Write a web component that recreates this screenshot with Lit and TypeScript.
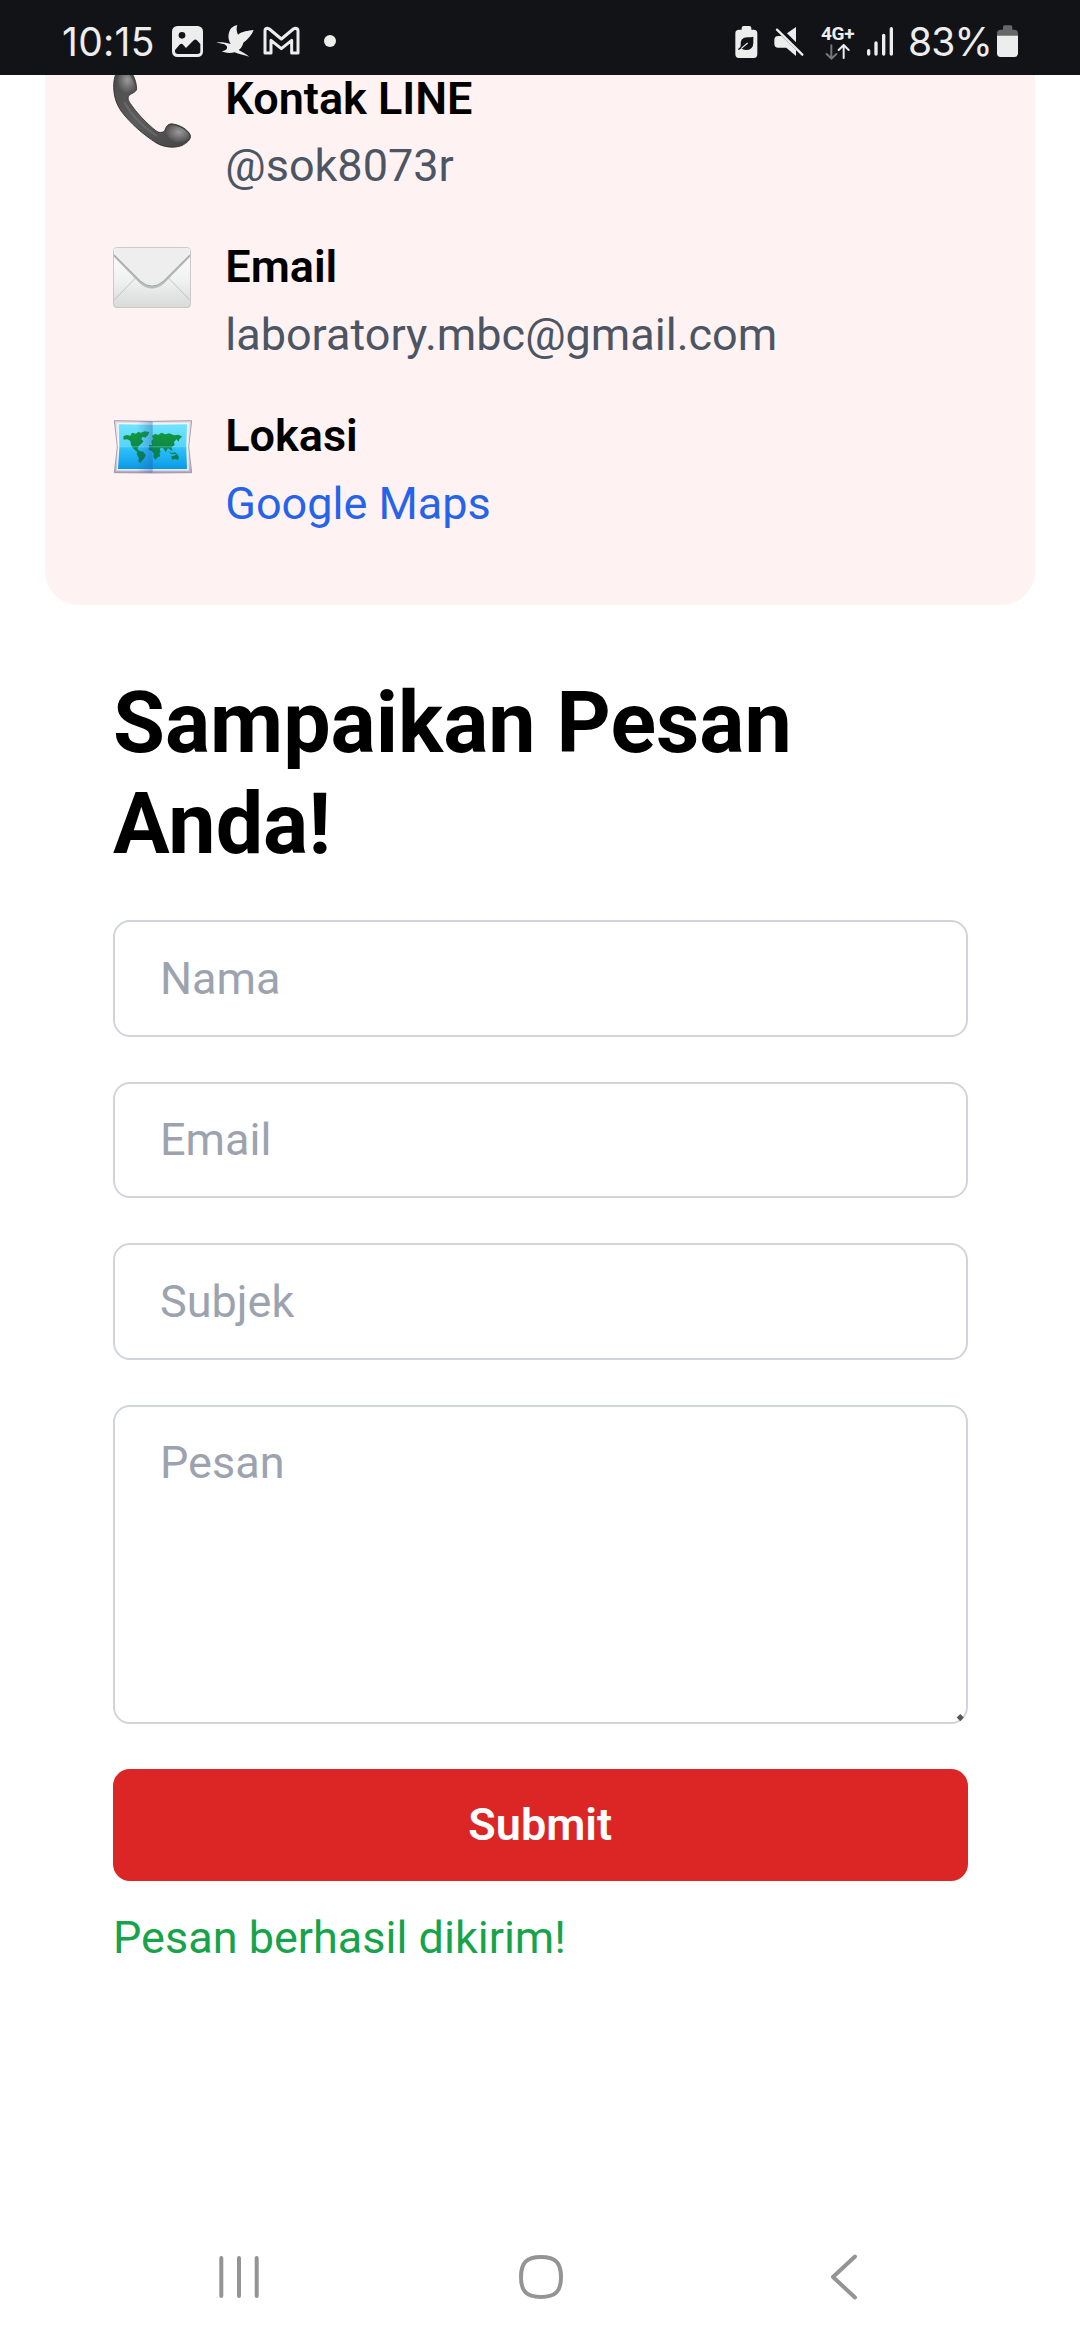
import { LitElement, html, css, svg } from "lit";
import { customElement } from "lit/decorators.js";

const phoneIcon = svg`
  <svg class="emoji" viewBox="249 16.5 237 270">
    <defs>
      <linearGradient id="pBody" x1="0" y1="0" x2="1" y2="1">
        <stop offset="0" stop-color="#4a4a4a" />
        <stop offset="0.5" stop-color="#5c5c5c" />
        <stop offset="1" stop-color="#444" />
      </linearGradient>
      <radialGradient id="pEar" cx="0.55" cy="0.4" r="0.6">
        <stop offset="0" stop-color="#9a9a9a" />
        <stop offset="1" stop-color="#505050" />
      </radialGradient>
    </defs>
    <path fill="url(#pBody)" stroke="#2b2b2b" stroke-width="2.5" stroke-linejoin="round"
      d="M251 84C250 50 262 25 280 24C304 26 319 60 320 88C319 99 302 102 297 108C292 115 295 124 301 132C318 158 350 192 378 214C387 221 400 220 404 213C408 204 412 193 425 193C448 195 474 210 481 227C484 240 470 251 456 258C430 268 400 262 380 251C340 226 300 190 275 157C258 133 252 110 251 84Z" />
    <path fill="url(#pEar)" d="M263 72C262 48 272 34 284 34C300 42 314 66 316 87C312 97 298 100 291 103C274 101 265 88 263 72Z" />
    <path fill="url(#pEar)" d="M409 214C410 203 418 196 428 197C450 200 472 212 478 229C476 242 460 250 440 249C422 244 408 232 409 214Z" />
    <path fill="none" stroke="#757575" stroke-width="6" stroke-linecap="round" opacity="0.6"
      d="M284 130C304 166 338 202 378 228" />
  </svg>`;

const envelopeIcon = svg`
  <svg class="emoji" viewBox="39 12 237 270">
    <defs>
      <linearGradient id="eBody" x1="0" y1="0" x2="0" y2="1">
        <stop offset="0" stop-color="#fdfdfd" />
        <stop offset="0.55" stop-color="#f0f1f1" />
        <stop offset="1" stop-color="#d8d9d9" />
      </linearGradient>
    </defs>
    <rect x="40.5" y="55.5" width="231" height="180" rx="10" fill="url(#eBody)" stroke="#c4c0c0" stroke-width="2.5" />
    <path fill="none" stroke="#c2c3c3" stroke-width="3" d="M43 213L106 147M269 213L206 147" />
    <path fill="none" stroke="#b9baba" stroke-width="6" d="M42 80L122 161Q156 190 190 161L270 80" />
    <path fill="#eeeeee" stroke="#8f9090" stroke-width="2.5"
      d="M41 76L122 157Q156 186 190 157L271 76" />
    <path fill="#eeeeee" d="M42 77V66Q42 57 51 57H261Q270 57 270 66V77Z" />
  </svg>`;

const mapIcon = svg`
  <svg class="emoji" viewBox="249 9 237 270">
    <defs>
      <linearGradient id="mSea" x1="0" y1="0" x2="0" y2="1">
        <stop offset="0" stop-color="#6fe4ff" />
        <stop offset="0.48" stop-color="#5ad4fb" />
        <stop offset="0.52" stop-color="#2fc2fb" />
        <stop offset="1" stop-color="#0a9ae6" />
      </linearGradient>
      <linearGradient id="mFold" x1="0" y1="0" x2="1" y2="0">
        <stop offset="0" stop-color="#1c4f9e" stop-opacity="0" />
        <stop offset="1" stop-color="#1c4f9e" stop-opacity="0.36" />
      </linearGradient>
      <linearGradient id="mPaper" x1="0" y1="0" x2="0" y2="1">
        <stop offset="0" stop-color="#dcd8e6" />
        <stop offset="0.5" stop-color="#f8f6fd" />
        <stop offset="1" stop-color="#b0a7c6" />
      </linearGradient>
      <linearGradient id="mLand" x1="0" y1="0" x2="0" y2="1">
        <stop offset="0" stop-color="#149a3a" />
        <stop offset="1" stop-color="#04795a" />
      </linearGradient>
    </defs>
    <path fill="url(#mPaper)" stroke="#958f9e" stroke-width="2.5" d="M253 65L368 67L485 65L476 143L485 221L368 222L253 221L262 143Z" />
    <path fill="#ffffff" opacity="0.7" d="M261 71H477L472 143L477 215H259L266 143Z" />
    <path fill="url(#mSea)" d="M266 76L368 77L471 76L469 143L471 210H264L268 143Z" />
    <path fill="url(#mLand)"
      d="M280 112L290 108L301 110L306 101L318 104L325 98L332 101L345 97L358 99L354 109L346 116L338 113L334 121L341 127L334 134L326 142L322 150L329 156L340 158L347 168L343 178L336 185L331 193L325 186L327 177L320 166L322 159L311 150L303 138L301 126L292 121L281 122Z
         M358 137L366 139L364 126L369 121L366 110L376 104L384 108L394 101L406 106L418 103L432 109L446 107L457 113L449 119L445 128L440 121L432 129L434 138L424 145L428 156L421 153L414 147L407 160L400 148L392 146L389 152L392 158L387 165L384 174L376 182L370 174L371 164L366 156L356 153L357 145Z
         M386 167L391 163L389 173L385 175Z M414 156L425 162L436 160L440 165L424 166Z M424 172L433 170L441 164L447 174L444 183L435 180L426 182Z" />
    <rect x="320" y="67" width="48" height="154" fill="url(#mFold)" />
    <rect x="264" y="142" width="208" height="3" fill="#8feaff" opacity="0.4" />
  </svg>`;

const contacts = [
  { icon: phoneIcon, title: "Kontak LINE", value: "@sok8073r", link: false },
  { icon: envelopeIcon, title: "Email", value: "laboratory.mbc@gmail.com", link: false },
  { icon: mapIcon, title: "Lokasi", value: "Google Maps", link: true },
];

@customElement("status-bar")
class StatusBar extends LitElement {
  static styles = css`
    :host {
      display: flex;
      justify-content: space-between;
      height: 75px;
      padding: 0 62px 0 62px;
      background: #121317;
      color: #ededed;
      font-family: Inter, Roboto, sans-serif;
      box-sizing: border-box;
    }
    .group { display: flex; height: 75px; }
    svg { display: block; height: 75px; flex: none; }
    .time, .percent {
      font-size: 39px;
      line-height: 83px;
      white-space: nowrap;
      flex: none;
    }
    .time { width: 110px; letter-spacing: 0.3px; }
    .percent { width: 89px; letter-spacing: -0.9px; }
    .network {
      width: 46px;
      display: flex;
      flex-direction: column;
      padding-top: 24px;
      box-sizing: border-box;
    }
    .net-label {
      font: 700 19px/20px Roboto, sans-serif;
      letter-spacing: -0.3px;
      white-space: nowrap;
    }
    .arrows { height: 16px; width: 33px; }
  `;

  render() {
    return html`
      <div class="group">
        <span class="time">10:15</span>
        <svg width="43" viewBox="396 0 129 225" fill="#ededed">
          <rect x="396" y="78" width="93" height="93" rx="16" />
          <circle cx="426" cy="106" r="10" fill="#121317" />
          <path fill="#121317" d="M405 150L420 133Q424 129 428 133L438 144L461 121Q466 116 471 121L481 132V154Q481 162 472 162H414Q405 162 405 154Z" />
        </svg>
        <svg width="48" viewBox="525 0 144 225" fill="#ededed">
          <path d="M528 127L546 127Q554 127 572 132C562 116 564 96 574 84Q582 76 592 75C588 86 590 94 594 104C606 94 624 92 641 90C636 104 624 118 610 128C608 136 604 144 596 150C606 156 618 162 628 170C612 166 596 162 584 157C572 160 558 160 545 154C558 152 564 146 560 138Q554 131 546 131Z" />
        </svg>
        <svg width="60" viewBox="669 0 180 225">
          <path fill="none" stroke="#ededed" stroke-width="9" stroke-linejoin="round"
            d="M675 93Q675 85 683 85L688 87L724 117L760 87L765 85Q774 85 774 93V159H755V121L724 146L693 121V159H675Z" />
        </svg>
        <svg width="14" viewBox="849 0 42 225"><circle cx="870" cy="123" r="18" fill="#ededed" /></svg>
      </div>
      <div class="group">
        <svg width="38" viewBox="74 0 114 225">
          <path fill="#ededed" d="M94 84Q94 78 100 78H117Q123 78 123 84V89H130Q141 89 141 100V163Q141 174 130 174H86Q75 174 75 163V100Q75 89 86 89H94Z" />
          <path fill="#121317" d="M129 110V128Q129 150 106 150Q98 150 93 145Q88 150 83 150L85 145Q89 144 91 139Q87 112 112 112Q122 112 129 110Z" />
          <path fill="none" stroke="#ededed" stroke-width="3.5" d="M93 145L112 129" />
        </svg>
        <svg width="48" viewBox="188 0 144 225">
          <path fill="#ededed" d="M192 120Q192 108 204 108H214L257 150V168L228 143H204Q192 143 192 132Z" />
          <path fill="#ededed" d="M230 100L257 81V127Z" />
          <path stroke="#121317" stroke-width="7" d="M203 82L283 158" />
          <path stroke="#ededed" stroke-width="7" stroke-linecap="round" d="M200 89L276 164" />
        </svg>
        <div class="network">
          <span class="net-label">4G+</span>
          <svg class="arrows" viewBox="330 130 99 48" fill="none" stroke-width="6" stroke-linecap="round" stroke-linejoin="round">
            <path stroke="#77787a" d="M361 134V173M347 160L361 174L376 160" />
            <path stroke="#ededed" d="M398 172V134M383 148L398 133L413 148" />
          </svg>
        </div>
        <svg width="41" viewBox="470 0 123 225" stroke="#ededed" stroke-width="10" stroke-linecap="round">
          <path d="M475 152V162M497 129V162M520 106V162M543 86V162" />
        </svg>
        <span class="percent">83%</span>
        <svg width="21" viewBox="861 0 63 225">
          <path fill="#66676a" d="M879 81Q879 76 884 76H902Q907 76 907 81V89H913Q924 89 924 100V108H861V100Q861 89 872 89H879Z" />
          <path fill="#ededed" d="M861 107H924V160Q924 171 913 171H872Q861 171 861 160Z" />
        </svg>
      </div>
    `;
  }
}

@customElement("nav-bar")
class NavBar extends LitElement {
  static styles = css`
    :host {
      display: grid;
      grid-template-columns: 478px 126px 480px;
      height: 126px;
      align-items: center;
      justify-items: center;
    }
    svg { display: block; fill: none; stroke: #949494; stroke-width: 4; stroke-linecap: round; }
  `;

  render() {
    return html`
      <svg width="44" height="48" viewBox="0 0 44 48"><path d="M4.3 5V43M22 5V43M39.7 5V43" /></svg>
      <svg width="48" height="48" viewBox="0 0 48 48">
        <path d="M24 4C38.5 4 44 9.5 44 24C44 38.5 38.5 44 24 44C9.5 44 4 38.5 4 24C4 9.5 9.5 4 24 4Z" />
      </svg>
      <svg width="30" height="48" viewBox="0 0 30 48"><path d="M26 3.5L4 24L26 44.5" stroke-linejoin="round" /></svg>
    `;
  }
}

@customElement("app-root")
class AppRoot extends LitElement {
  static styles = css`
    :host {
      display: flex;
      flex-direction: column;
      width: 1080px;
      height: 2340px;
      overflow: hidden;
      background: #fff;
      color: #000;
      font-family: Roboto, sans-serif;
      font-size: 45px;
      line-height: 67.5px;
    }
    .page { flex: 1; min-height: 0; overflow: hidden; padding: 0 45px; }
    .card {
      background: #fef2f2;
      border-radius: 0 0 33.75px 33.75px;
      padding: 0 67.5px 67.5px;
      height: 529.5px;
      box-sizing: border-box;
      overflow: hidden;
      display: flex;
      flex-direction: column;
      justify-content: flex-end;
      gap: 33.75px;
    }
    .contact { display: flex; gap: 33.75px; height: 135px; flex: none; }
    .emoji { width: 79px; height: 90px; display: block; flex: none; }
    .title { font-weight: 600; }
    .value { color: #4b5563; }
    .link { color: #2563eb; text-decoration: none; }
    .form {
      display: flex;
      flex-direction: column;
      gap: 45px;
      padding: 68.2px 67.5px 0 68px;
    }
    h2 { margin: 0; font-size: 84.375px; line-height: 101.25px; font-weight: 700; }
    input, textarea {
      display: block;
      width: 100%;
      box-sizing: border-box;
      margin: 0;
      padding: 22.5px 45px;
      border: 2px solid #d1d5db;
      border-radius: 16.9px;
      background: #fff;
      font: inherit;
      color: #000;
      resize: none;
      outline: none;
    }
    input { height: 116.5px; }
    textarea { height: 319px; overflow: hidden; }
    ::placeholder { color: #9ca3af; opacity: 1; }
    .area { position: relative; }
    .grip {
      position: absolute;
      right: 5px;
      bottom: 4px;
      width: 4.5px;
      height: 4.5px;
      background: #55565a;
      transform: rotate(45deg);
    }
    .submit {
      height: 112.5px;
      border: 0;
      border-radius: 16.9px;
      background: #dc2626;
      color: #fff;
      font: inherit;
      font-weight: 600;
    }
    .sent { margin: -22.5px 0 0; color: #16a34a; }
  `;

  render() {
    return html`
      <status-bar></status-bar>
      <main class="page">
        <section class="card">
          ${contacts.map(
            (c) => html`
              <div class="contact">
                ${c.icon}
                <div>
                  <div class="title">${c.title}</div>
                  ${c.link
                    ? html`<a class="link">${c.value}</a>`
                    : html`<div class="value">${c.value}</div>`}
                </div>
              </div>
            `
          )}
        </section>
        <section class="form">
          <h2>Sampaikan Pesan Anda!</h2>
          <input placeholder="Nama" />
          <input placeholder="Email" />
          <input placeholder="Subjek" />
          <div class="area">
            <textarea placeholder="Pesan"></textarea>
            <span class="grip"></span>
          </div>
          <button class="submit">Submit</button>
          <p class="sent">Pesan berhasil dikirim!</p>
        </section>
      </main>
      <nav-bar></nav-bar>
    `;
  }
}
